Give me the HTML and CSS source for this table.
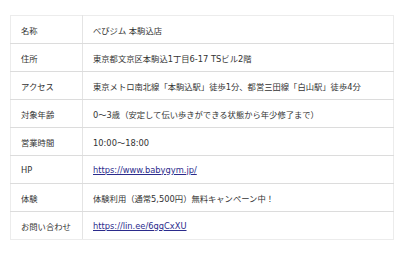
FILE: index.html
```html
<!DOCTYPE html>
<html lang="ja">
<head>
<meta charset="utf-8">
<link rel="stylesheet" href="styles.css">
</head>
<body>
<div class="wrap">
<table class="info">
<tbody>
<tr><th>名称</th><td>べびジム 本駒込店</td></tr>
<tr><th>住所</th><td>東京都文京区本駒込1丁目6-17 TSビル2階</td></tr>
<tr><th>アクセス</th><td>東京メトロ南北線「本駒込駅」徒歩1分、都営三田線「白山駅」徒歩4分</td></tr>
<tr><th>対象年齢</th><td>0～3歳（安定して伝い歩きができる状態から年少修了まで）</td></tr>
<tr><th>営業時間</th><td>10:00～18:00</td></tr>
<tr><th>HP</th><td><a href="#">https://www.babygym.jp/</a></td></tr>
<tr><th>体験</th><td>体験利用（通常5,500円）無料キャンペーン中！</td></tr>
<tr><th>お問い合わせ</th><td><a href="#">https://lin.ee/6gqCxXU</a></td></tr>
</tbody>
</table>
</div>
</body>
</html>
```
FILE: styles.css
```css
html, body {
  margin: 0;
  padding: 0;
  background: #fff;
}
.wrap {
  padding: 15px 20px 0 10px;
}
.info {
  width: 100%;
  border-collapse: collapse;
  border: 1px solid #ececec;
  font-family: "DejaVu Sans", "Noto Sans CJK JP", sans-serif;
  font-size: 8.3px;
  color: #333;
}
.info tr {
  height: 28px;
}
.info th,
.info td {
  padding: 0 10px;
  text-align: left;
  font-weight: normal;
  border-bottom: 1px solid #dcdcdc;
  vertical-align: middle;
}
.info tr:last-child th,
.info tr:last-child td {
  border-bottom: 1px solid #ececec;
}
.info th {
  width: 72px;
  box-sizing: border-box;
  border-right: 1px solid #e4e4e4;
}
.info a {
  color: #2b2b8c;
  text-decoration: underline;
}
```
